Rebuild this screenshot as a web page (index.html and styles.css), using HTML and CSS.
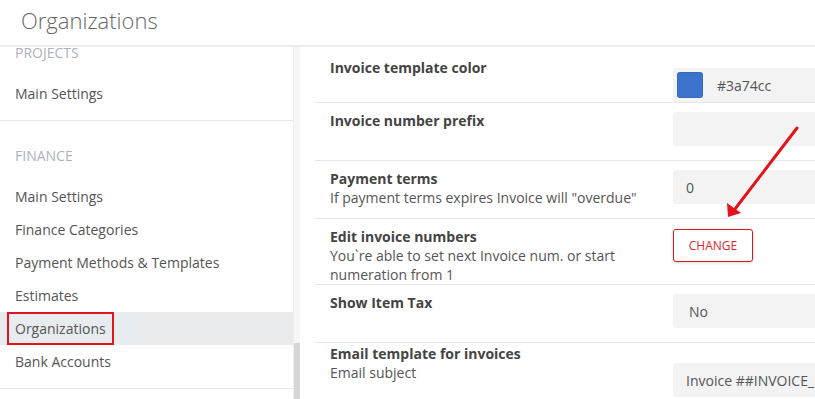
FILE: index.html
```html
<!DOCTYPE html>
<html lang="en">
<head>
  <meta charset="UTF-8" />
  <title>Organizations</title>
  <meta name="viewport" content="width=device-width, initial-scale=1.0" />
  <link rel="stylesheet" href="styles.css">
</head>
<body>

  <header class="topbar">
    <h1>Organizations</h1>
  </header>

  <div class="layout">
    <aside class="sidebar">
      <nav class="sidebar-inner">
        <div class="nav-group nav-group-first">
          <div class="nav-title">Projects</div>
          <a class="nav-item">Main Settings</a>
        </div>
        <div class="nav-group">
          <div class="nav-title">Finance</div>
          <a class="nav-item">Main Settings</a>
          <a class="nav-item">Finance Categories</a>
          <a class="nav-item">Payment Methods &amp; Templates</a>
          <a class="nav-item">Estimates</a>
          <a class="nav-item active"><span class="mark">Organizations</span></a>
          <a class="nav-item">Bank Accounts</a>
        </div>
      </nav>
      <div class="scrollbar"><div class="thumb"></div></div>
    </aside>

    <main class="content">
      <!-- Invoice settings -->
      <div class="field field-first">
        <div class="field-label"><strong>Invoice template color</strong></div>
        <div class="field-control">
          <div class="input input-color"><span class="swatch"></span>#3a74cc</div>
        </div>
      </div>
      <div class="field">
        <div class="field-label"><strong>Invoice number prefix</strong></div>
        <div class="field-control">
          <div class="input"></div>
        </div>
      </div>
      <div class="field">
        <div class="field-label">
          <strong>Payment terms</strong>
          If payment terms expires Invoice will "overdue"
        </div>
        <div class="field-control">
          <div class="input">0</div>
        </div>
      </div>
      <div class="field">
        <div class="field-label">
          <strong>Edit invoice numbers</strong>
          You`re able to set next Invoice num. or start numeration from 1
        </div>
        <div class="field-control field-control-btn">
          <button class="btn-change">Change</button>
        </div>
      </div>
      <div class="field">
        <div class="field-label"><strong>Show Item Tax</strong></div>
        <div class="field-control">
          <div class="input input-select">No</div>
        </div>
      </div>
      <div class="field field-email">
        <div class="field-label">
          <strong>Email template for invoices</strong>
          Email subject
        </div>
        <div class="field-control">
          <div class="input">Invoice ##INVOICE_NUMBER## from ##COMPANY##</div>
        </div>
      </div>
    </main>
  </div>

  <!-- annotation arrow -->
  <svg class="arrow" width="815" height="399" viewBox="0 0 815 399">
    <path d="M797 128 L735 209" stroke="#e3121b" stroke-width="3" stroke-linecap="round" fill="none" />
    <polygon points="728,217 727,203 741,213" fill="#e3121b" />
  </svg>

</body>
</html>
```

FILE: styles.css
```css
body {
  font-family: 'Open Sans', 'Liberation Sans', Arial, sans-serif;
  font-size: 14px;
  color: #555;
  background: #fff;
  margin: 0;
  height: 100vh;
  overflow: hidden;
  position: relative;
}

.topbar {
  height: 47px;
  background: #fff;
  border-bottom: 2px solid #ececec;
  box-sizing: border-box;
  position: relative;
  z-index: 2;
}

.topbar h1 {
  margin: 0;
  padding: 4px 0 0 21px;
  font-size: 22px;
  font-weight: 300;
  color: #666;
  line-height: 33px;
}

.layout {
  display: flex;
  height: calc(100vh - 47px);
  overflow: hidden;
}

/* sidebar */

.sidebar {
  display: flex;
  flex: none;
  width: 300px;
}

.sidebar-inner {
  width: 294px;
  overflow: hidden;
}

.nav-group {
  padding: 25px 0 10px;
  border-bottom: 1px solid #e6e6e6;
}

.nav-group-first {
  margin-top: -29px;
}

.nav-title {
  padding: 0 15px;
  line-height: 19px;
  margin-bottom: 15px;
  text-transform: uppercase;
  color: #adb2bd;
}

.nav-item {
  display: block;
  padding: 7px 15px;
  line-height: 19px;
  color: #555;
  cursor: pointer;
}

.nav-item.active {
  background: #e9ecef;
}

.mark {
  display: inline-block;
  margin: -7px -8px;
  padding: 5px 6px;
  border: 2px solid #e0141c;
}

.scrollbar {
  width: 6px;
  display: flex;
  flex-direction: column;
  background: #f7f7f7;
  border-left: 1px solid #efefef;
}

.thumb {
  margin-top: auto;
  height: 56px;
  background: #d6d6d6;
}

/* main content */

.content {
  flex: 1;
  padding-left: 15px;
  overflow: hidden;
}

.field {
  display: flex;
  min-height: 58px;
  padding: 8px 0 0 15px;
  box-sizing: border-box;
  border-bottom: 1px solid #e6e6e6;
}

.field-first {
  min-height: 55px;
  padding-top: 11px;
}

.field-control {
  flex: none;
  width: 300px;
  margin-top: 1px;
}

.field-first .field-control {
  margin-top: 10px;
}

.field-email {
  border-bottom: none;
  padding-top: 1px;
}

.field-email .field-control {
  margin-top: 19px;
}

.field-control-btn {
  margin-top: 2px;
}

.field-label {
  flex: none;
  width: 343px;
  padding-right: 15px;
  box-sizing: border-box;
  line-height: 19px;
  color: #555;
}

.field-label strong {
  display: block;
  color: #444;
  font-weight: 700;
}

.input {
  display: flex;
  align-items: center;
  height: 34px;
  padding: 0 13px;
  background: #f3f3f3;
  border-radius: 3px;
  color: #555;
  white-space: nowrap;
  overflow: hidden;
}

.input-color {
  padding-left: 4px;
}

.swatch {
  width: 26px;
  height: 26px;
  margin-right: 14px;
  border-radius: 3px;
  background: #3a74cc;
  box-shadow: inset 0 0 0 1px rgba(0,0,0,0.08);
}

.input-select {
  padding-left: 16px;
}

.btn-change {
  width: 80px;
  height: 33px;
  background: #fff;
  border: 1px solid #d9191f;
  border-radius: 3px;
  color: #d9272e;
  font-family: inherit;
  font-size: 12px;
  text-transform: uppercase;
  box-shadow: 0 1px 3px rgba(0,0,0,0.15);
  cursor: pointer;
}

.arrow {
  position: absolute;
  left: 0;
  top: 0;
  pointer-events: none;
  z-index: 3;
}
```
